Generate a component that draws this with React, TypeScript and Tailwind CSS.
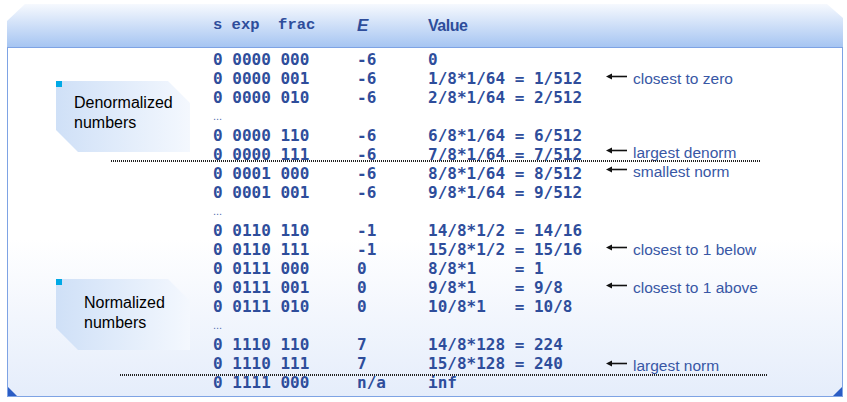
type Row = { bits?: string; e?: string; v?: string; note?: string; nudge?: string };

const rows: Row[] = [
  { bits: "0 0000 000", e: "-6", v: "0" },
  { bits: "0 0000 001", e: "-6", v: "1/8*1/64 = 1/512", note: "closest to zero" },
  { bits: "0 0000 010", e: "-6", v: "2/8*1/64 = 2/512" },
  {},
  { bits: "0 0000 110", e: "-6", v: "6/8*1/64 = 6/512" },
  { bits: "0 0000 111", e: "-6", v: "7/8*1/64 = 7/512", note: "largest denorm", nudge: "-translate-y-[2px]" },
  { bits: "0 0001 000", e: "-6", v: "8/8*1/64 = 8/512", note: "smallest norm", nudge: "-translate-y-[2px]" },
  { bits: "0 0001 001", e: "-6", v: "9/8*1/64 = 9/512" },
  {},
  { bits: "0 0110 110", e: "-1", v: "14/8*1/2 = 14/16" },
  { bits: "0 0110 111", e: "-1", v: "15/8*1/2 = 15/16", note: "closest to 1 below" },
  { bits: "0 0111 000", e: "0", v: "8/8*1    = 1" },
  { bits: "0 0111 001", e: "0", v: "9/8*1    = 9/8", note: "closest to 1 above" },
  { bits: "0 0111 010", e: "0", v: "10/8*1   = 10/8" },
  {},
  { bits: "0 1110 110", e: "7", v: "14/8*128 = 224" },
  { bits: "0 1110 111", e: "7", v: "15/8*128 = 240", note: "largest norm", nudge: "translate-y-[2px]" },
  { bits: "0 1111 000", e: "n/a", v: "inf" },
];

function Arrow() {
  return (
    <svg width="21" height="7" viewBox="0 0 21 7" className="shrink-0 -translate-y-[2px]">
      <line x1="4" y1="3.5" x2="21" y2="3.5" stroke="#111" strokeWidth="1.6" />
      <polygon points="0,3.5 6,0.5 6,6.5" fill="#111" />
    </svg>
  );
}

function Callout({ lines, pad }: { lines: string[]; pad: string }) {
  return (
    <div
      className={`relative ml-[48px] h-[71px] w-[134px] bg-[linear-gradient(to_right,#cfe0f7,#f4f8fe)] [clip-path:polygon(0_0,112px_0,100%_22px,100%_100%,22px_100%,0_49px)] ${pad}`}
    >
      <div className="absolute left-0 top-0 h-[6px] w-[6px] bg-[#00a9e6]" />
      {lines.map((l) => (
        <div key={l} className="text-[16px] leading-[20px] text-black">
          {l}
        </div>
      ))}
    </div>
  );
}

export default function App() {
  return (
    <div className="h-[402px] w-[847px] bg-white pl-[7px] pt-[4px] font-['Liberation_Sans',Arial,sans-serif]">
      <div className="w-[836px]">
        <div className="flex h-[43px] items-center bg-[linear-gradient(to_bottom,#f6f9fe,#a6c5f2)] pl-[206px] pt-[1px] text-[#2e4d9b] [clip-path:polygon(0_17px,18px_0,calc(100%_-_16px)_0,100%_14px,100%_100%,0_100%)]">
          <span className="w-[144px] whitespace-pre font-['Liberation_Mono',monospace] text-[15.5px] font-bold">s exp  frac</span>
          <span className="w-[71px] text-[17px] font-bold italic">E</span>
          <span className="text-[16px] font-bold tracking-[-0.5px]">Value</span>
        </div>

        <div className="relative flex h-[350px] border border-[#7ea3e4] bg-[linear-gradient(to_bottom,#ffffff_0%,#ffffff_55%,#e5edfb_100%)]">
          <div className="flex w-[205px] flex-col">
            <Callout lines={["Denormalized", "numbers"]} pad="mt-[33px] pl-[18px] pt-[12px]" />
            <Callout lines={["Normalized", "numbers"]} pad="mt-[127px] pl-[28px] pt-[14px]" />
          </div>

          <div className="flex flex-col pt-[2px] text-[#2e4d9b]">
            {rows.map((r, i) =>
              r.bits ? (
                <div key={i} className="flex h-[19px] items-center">
                  <span className="w-[144px] whitespace-pre font-['DejaVu_Sans_Mono',monospace] text-[16px] font-bold leading-[19px]">{r.bits}</span>
                  <span className="w-[71px] whitespace-pre font-['DejaVu_Sans_Mono',monospace] text-[16px] font-bold leading-[19px]">{r.e}</span>
                  <span className="w-[178px] whitespace-pre font-['DejaVu_Sans_Mono',monospace] text-[16px] font-bold leading-[19px]">{r.v}</span>
                  {r.note && (
                    <span className={`flex items-center gap-[6px] ${r.nudge ?? ""}`}>
                      <Arrow />
                      <span className="text-[15.5px] leading-[19px] text-[#3857a5]">{r.note}</span>
                    </span>
                  )}
                </div>
              ) : (
                <div key={i} className="h-[19px] text-[11px] leading-[19px] text-[#5670b0]">...</div>
              )
            )}
          </div>

          <div className="absolute left-[103px] top-[112px] h-[2px] w-[649px] bg-[repeating-linear-gradient(90deg,#222_0_1px,transparent_1px_2px)]" />
          <div className="absolute left-[112px] top-[326px] h-[2px] w-[648px] bg-[repeating-linear-gradient(90deg,#222_0_1px,transparent_1px_2px)]" />

          <div className="absolute bottom-0 left-0 h-0 w-0 border-b-[9px] border-r-[9px] border-b-[#2a5cc4] border-r-transparent" />
          <div className="absolute bottom-0 right-0 h-0 w-0 border-b-[9px] border-l-[9px] border-b-[#2a5cc4] border-l-transparent" />
        </div>
      </div>
    </div>
  );
}
